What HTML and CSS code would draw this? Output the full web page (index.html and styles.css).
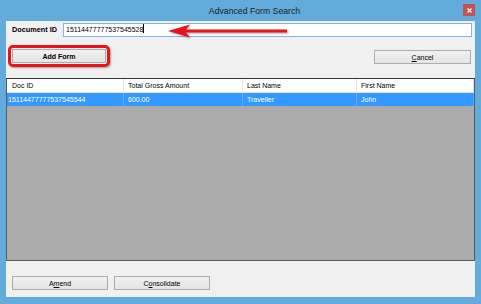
FILE: index.html
```html
<!DOCTYPE html>
<html lang="en">
<head>
    <meta charset="UTF-8">
    <meta name="viewport" content="width=device-width, initial-scale=1.0">
    <title>Advanced Form Search</title>
    <link rel="stylesheet" href="styles.css">
</head>
<body>
    <div class="window">
        <div class="titlebar">
            <span class="title">Advanced Form Search</span>
            <span class="close-button">
                <svg width="5" height="5" viewBox="0 0 5 5"><path d="M0.5 0.5 L4.5 4.5 M4.5 0.5 L0.5 4.5" stroke="#fff" stroke-width="1.2"/></svg>
            </span>
        </div>

        <div class="client">
            <div class="search-row">
                <label class="field-label">Document ID</label>
                <div class="text-box">15114477777537545528<span class="caret"></span></div>
            </div>

            <div class="action-row">
                <span class="highlight">
                    <button class="win-button bold">Add Form</button>
                </span>
                <button class="win-button cancel-button"><u>C</u>ancel</button>
            </div>

            <div class="list-view">
                <div class="list-row list-header">
                    <span>Doc ID</span>
                    <span>Total Gross Amount</span>
                    <span>Last Name</span>
                    <span>First Name</span>
                </div>
                <div class="list-row list-item selected">
                    <span>15114477777537545544</span>
                    <span>600.00</span>
                    <span>Traveller</span>
                    <span>John</span>
                </div>
            </div>

            <div class="bottom-row">
                <button class="win-button">A<u>m</u>end</button>
                <button class="win-button">C<u>o</u>nsolidate</button>
            </div>
        </div>

        <!-- annotation arrow pointing at the document id -->
        <svg class="arrow" width="135" height="22" viewBox="0 0 135 22">
            <polygon points="8,11 30,4.5 26,9.5 127,9.5 127,12.5 26,12.5 30,17.5" fill="#e8141c"/>
        </svg>
    </div>
</body>
</html>
```

FILE: styles.css
```css
body {
    margin: 0;
    font-family: "Liberation Sans", Arial, sans-serif;
}
.window {
    position: relative;
    width: 481px;
    height: 304px;
    background-color: #62abdb;
    display: flex;
    flex-direction: column;
}
.titlebar {
    height: 21px;
    display: flex;
    align-items: flex-start;
}
.title {
    flex: 1;
    text-align: center;
    padding-left: 46px;
    padding-top: 6px;
    font-size: 8.7px;
    color: #1b1b1b;
}
.close-button {
    width: 12px;
    height: 12px;
    margin-top: 4px;
    margin-right: 6px;
    background-color: #c75050;
    display: flex;
    align-items: center;
    justify-content: center;
}
.client {
    height: 276px;
    margin: 0 6px;
    background-color: #f0f0f0;
    display: flex;
    flex-direction: column;
    font-size: 7px;
}
.search-row {
    display: flex;
    align-items: flex-start;
    margin-top: 2px;
    margin-right: 3px;
}
.field-label {
    width: 51px;
    margin-left: 6px;
    padding-top: 2px;
    font-size: 7.3px;
    font-weight: bold;
    color: #000;
}
.text-box {
    flex: 1;
    height: 12px;
    line-height: 12px;
    padding-left: 2px;
    background-color: #fff;
    border: 1px solid #7eb4ea;
    font-size: 7px;
    color: #000;
}
.caret {
    display: inline-block;
    width: 0;
    height: 9px;
    vertical-align: -1px;
    border-right: 1px solid #000;
}
.action-row {
    display: flex;
    align-items: center;
    justify-content: space-between;
    margin-top: 8px;
    margin-left: 2px;
    margin-right: 4px;
}
.highlight {
    display: flex;
    padding: 0 1px;
    height: 16px;
    align-items: center;
    border: 3px solid #e8141c;
    border-radius: 5px;
    box-shadow: 1px 1px 2px rgba(0, 0, 0, 0.35);
}
.win-button {
    width: 96px;
    height: 14px;
    padding: 0;
    font-family: "Liberation Sans", Arial, sans-serif;
    font-size: 7px;
    color: #000;
    background: linear-gradient(#f0f0f0, #e5e5e5);
    border: 1px solid #acacac;
}
.highlight .win-button {
    width: 94px;
}
.bold {
    font-weight: bold;
}
.cancel-button {
    width: 97px;
    margin-top: 2px;
}
.list-view {
    height: 181px;
    margin-top: 11px;
    background-color: #ababab;
    border: 1px solid #5a5a5a;
    border-top-color: #333;
}
.list-row {
    display: grid;
    grid-template-columns: 117px 119px 114px 1fr;
    height: 13px;
    line-height: 13px;
}
.list-row span {
    padding-left: 4px;
    white-space: nowrap;
    overflow: hidden;
}
.list-header {
    background-color: #fff;
    color: #000;
    border-bottom: 1px solid #e5e5e5;
}
.list-header span {
    border-right: 1px solid #e5e5e5;
}
.list-header span:first-child {
    padding-left: 5px;
}
.list-item span:first-child {
    padding-left: 1px;
}
.selected {
    background-color: #3399ff;
    color: #fff;
}
.selected span {
    border-right: 1px solid #5aadff;
}
.bottom-row {
    display: flex;
    gap: 6px;
    margin-top: 15px;
    margin-left: 6px;
}
.arrow {
    position: absolute;
    left: 160px;
    top: 20px;
    filter: drop-shadow(1px 1px 1px rgba(0, 0, 0, 0.35));
}
```
